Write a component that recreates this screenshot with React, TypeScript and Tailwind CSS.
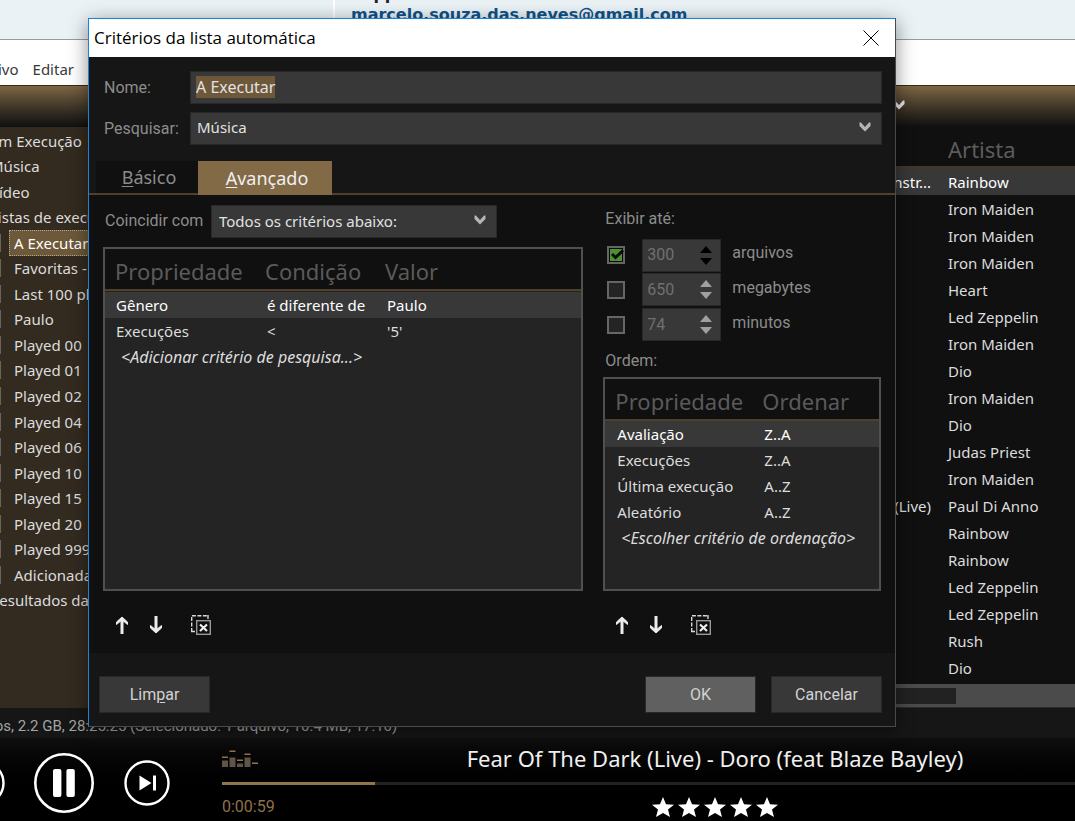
import React, { useEffect, useRef } from "react";

const playlists = [
  { label: "A Executar", selected: true },
  { label: "Favoritas - 5 estrelas" },
  { label: "Last 100 played" },
  { label: "Paulo" },
  { label: "Played 00" },
  { label: "Played 01" },
  { label: "Played 02" },
  { label: "Played 04" },
  { label: "Played 06" },
  { label: "Played 10" },
  { label: "Played 15" },
  { label: "Played 20" },
  { label: "Played 999" },
  { label: "Adicionadas" },
];

const tracks = [
  { title: "(Instr...", artist: "Rainbow" },
  { title: "", artist: "Iron Maiden" },
  { title: "", artist: "Iron Maiden" },
  { title: "", artist: "Iron Maiden" },
  { title: "", artist: "Heart" },
  { title: "", artist: "Led Zeppelin" },
  { title: "", artist: "Iron Maiden" },
  { title: "", artist: "Dio" },
  { title: "", artist: "Iron Maiden" },
  { title: "", artist: "Dio" },
  { title: "", artist: "Judas Priest" },
  { title: "", artist: "Iron Maiden" },
  { title: "(Live)", artist: "Paul Di Anno" },
  { title: "", artist: "Rainbow" },
  { title: "", artist: "Rainbow" },
  { title: "", artist: "Led Zeppelin" },
  { title: "", artist: "Led Zeppelin" },
  { title: "", artist: "Rush" },
  { title: "", artist: "Dio" },
];

const limits = [
  { id: "files", value: "300", unit: "arquivos", checked: true },
  { id: "megabytes", value: "650", unit: "megabytes", checked: false },
  { id: "minutes", value: "74", unit: "minutos", checked: false },
];

const sortRules = [
  ["Avaliação", "Z..A"],
  ["Execuções", "Z..A"],
  ["Última execução", "A..Z"],
  ["Aleatório", "A..Z"],
];

function Chevron({ className }: { className: string }) {
  return (
    <svg viewBox="0 0 12 10" className={`w-3 h-[10px] ${className}`} fill="currentColor">
      <path d="M0.500 0.500L2 0.500L6 5L10 0.500L11.500 0.500L11.500 4L6 9.500L0.500 4Z" />
    </svg>
  );
}

function ListTools() {
  return (
    <div className="flex items-center h-[21px] mt-[23px] pl-3 text-[#ececec]">
      <button aria-label="Mover para cima" className="w-[14px]">
        <svg viewBox="0 0 14 20" className="w-[14px] h-5" fill="none" stroke="currentColor" strokeWidth="3">
          <path d="M7 19V4" />
          <path d="M1.5 9.5V7L7 2L12.5 7V9.5L7 5Z" fill="currentColor" strokeWidth="1" />
        </svg>
      </button>
      <button aria-label="Mover para baixo" className="w-[14px] ml-5">
        <svg viewBox="0 0 14 20" className="w-[14px] h-5" fill="none" stroke="currentColor" strokeWidth="3">
          <path d="M7 1V16" />
          <path d="M1.5 10.5V13L7 18L12.5 13V10.5L7 15Z" fill="currentColor" strokeWidth="1" />
        </svg>
      </button>
      <button aria-label="Remover" className="w-5 ml-7">
        <svg viewBox="0 0 20 20" className="w-5 h-5" fill="none">
          <path d="M.7 17V.7H17" stroke="#d8d8d8" strokeWidth="1.4" strokeDasharray="4 1.5" />
          <path d="M0 16.5H4M17 0V4" stroke="#d8d8d8" strokeWidth="1.4" />
          <rect x="5.7" y="5.7" width="13.6" height="13.6" stroke="#9a9a9a" strokeWidth="1.4" />
          <path d="M9 9.500L16 16M16 9.500L9 16" stroke="#f0f0f0" strokeWidth="2.2" />
        </svg>
      </button>
    </div>
  );
}

function Sidebar() {
  return (
    <nav className="w-64 shrink-0 bg-[#332b20] pt-px text-[#dcdcdc]">
      <ul className="grid auto-rows-fr h-[485px] pl-[38px] whitespace-nowrap">
        <li className="flex items-center">Em Execução</li>
        <li className="flex items-center">Música</li>
        <li className="flex items-center">Vídeo</li>
        <li className="flex items-center">Listas de execução</li>
        {playlists.map((item) => (
          <li key={item.label} className="flex items-center">
            <span className="w-[11px] h-[18px] border border-[#6a655c]"></span>
            <span
              className={`ml-2 px-1 h-full flex items-center border border-dotted ${
                item.selected ? "bg-[#6d5839] border-[#b0a890] text-white" : "border-transparent"
              }`}
            >
              {item.label}
            </span>
          </li>
        ))}
        <li className="flex items-center">Resultados da pesquisa</li>
      </ul>
    </nav>
  );
}

function TrackList() {
  return (
    <div className="flex-1 flex flex-col bg-[#101010]">
      <table className="w-full mb-[3px] table-fixed border-collapse text-[#dcdcdc]">
        <thead>
          <tr className="h-10 border-b-2 border-[#463724] text-[22px] leading-6 text-[#5c5c5c]">
            <th></th>
            <th className="w-[260px] pt-1 text-left font-normal">Artista</th>
          </tr>
        </thead>
        <tbody>
          <tr className="h-px"></tr>
          {tracks.map((track, idx) => (
            <tr key={idx} className={`h-[27px] ${idx === 0 ? "bg-[#383838] text-white" : ""}`}>
              <td className="text-right pr-[17px]">{track.title}</td>
              <td>{track.artist}</td>
            </tr>
          ))}
        </tbody>
      </table>
      <div className="h-6 bg-[#4b4b4b] border-b border-[#2a2a2a] flex items-center">
        <div className="flex-1 h-4 bg-[#222222]"></div>
        <div className="w-[252px]"></div>
      </div>
    </div>
  );
}

function Player() {
  return (
    <footer className="flex-1 min-h-[83px] flex items-start bg-gradient-to-b from-[#0f0f0f] to-black to-80%">
      <div className="flex items-center w-[270px] shrink-0 h-[83px] pt-[6px] text-white">
        <button aria-label="Anterior" className="ml-[7px] w-[46px]">
          <svg viewBox="0 0 46 46" className="w-[46px] h-[46px]" fill="none" stroke="currentColor">
            <circle cx="23" cy="23" r="21.5" strokeWidth="2.4" />
            <path d="M16 16V30M30 16L19 23L30 30Z" fill="currentColor" strokeWidth="2" />
          </svg>
        </button>
        <button aria-label="Pausar" className="ml-[29px] w-[60px]">
          <svg viewBox="0 0 60 60" className="w-[60px] h-[60px]" fill="none">
            <circle cx="30" cy="30" r="28.7" stroke="currentColor" strokeWidth="2.6" />
            <rect x="19" y="16" width="8.4" height="28" rx="2" fill="currentColor" />
            <rect x="32.4" y="16" width="8.4" height="28" rx="2" fill="currentColor" />
          </svg>
        </button>
        <button aria-label="Próxima" className="ml-[30px] w-[46px]">
          <svg viewBox="0 0 46 46" className="w-[46px] h-[46px]" fill="none">
            <circle cx="23" cy="23" r="21.5" stroke="currentColor" strokeWidth="2.4" />
            <path d="M15.5 15.5L27.5 23L15.5 30.5Z" fill="currentColor" />
            <path d="M30.5 15.5V30.5" stroke="currentColor" strokeWidth="3" />
          </svg>
        </button>
      </div>
      <div className="flex-1">
        <div className="grid grid-cols-[1fr_auto_1fr] h-11">
          <svg viewBox="0 0 37 18" className="w-[37px] h-[18px] mt-3">
            <g fill="#8f7149">
              <rect x="0" y="6.500" width="6" height="1.500" />
              <rect x="7.500" y=".5" width="6" height="1.500" />
              <rect x="15" y="9.500" width="6" height="1.500" />
              <rect x="22.500" y="3.500" width="6" height="1.500" />
              <rect x="30" y="12.500" width="6" height="1.500" />
            </g>
            <g fill="#5f5448">
              <rect x="0" y="10.500" width="6" height="6.500" />
              <rect x="7.500" y="7.500" width="6" height="9.500" />
              <rect x="15" y="13.500" width="6" height="3.500" />
              <rect x="22.500" y="7.500" width="6" height="9.500" />
            </g>
          </svg>
          <h2 className="text-[22px] leading-10 text-[#f0f0f0] whitespace-nowrap">
            Fear Of The Dark (Live) - Doro (feat Blaze Bayley)
          </h2>
        </div>
        <div className="h-[3px] bg-[#232323]">
          <div className="h-full w-[153px] bg-[#93754b]"></div>
        </div>
        <div className="grid grid-cols-[1fr_auto_1fr] items-center h-9 pt-2">
          <span className="font-[Roboto,sans-serif] text-base leading-5 text-[#8f7149]">0:00:59</span>
          <div className="flex gap-1" aria-label="5 estrelas">
            {[1, 2, 3, 4, 5].map((n) => (
              <svg key={n} viewBox="0 0 22 20" className="w-[22px] h-5" fill="#ffffff">
                <path d="M11 0L14 7.200L22 7.800L16 12.600L18 20L11 16L4 20L6 12.600L0 7.800L8 7.200Z" />
              </svg>
            ))}
          </div>
        </div>
      </div>
    </footer>
  );
}

const headCell = "h-[41px] p-0 pt-1 text-left font-normal text-[22px] leading-6 text-[#5a5a5a] bg-[#101010]";
const fieldStyle = "bg-[#383838] border border-[#282828] text-[#e2e2e2] outline-none";
const buttonStyle = "w-[111px] h-[37px] border border-[#282828] text-[#d2d2d2]";
const listBox = "border-2 border-[#505050] bg-[#242424] text-[#dcdcdc]";

function CriteriaDialog() {
  const nameRef = useRef<HTMLInputElement>(null);

  useEffect(() => {
    nameRef.current?.focus();
    nameRef.current?.select();
  }, []);

  return (
    <div
      role="dialog"
      aria-label="Critérios da lista automática"
      className="absolute top-[18px] left-[88px] right-[179px] border border-t-[#1883d7] border-l-[#1883d7] border-r-[#4a4a4a] border-b-[#4a4a4a] bg-[#161616] shadow-[0_4px_18px_rgba(0,0,0,0.45)]"
    >
      <div className="h-[38px] pl-[5px] pr-4 flex items-center justify-between bg-white text-black">
        <h1 className="font-['Open_Sans',sans-serif] text-[17px] leading-6">Critérios da lista automática</h1>
        <button aria-label="Fechar" className="w-4 h-4">
          <svg viewBox="0 0 16 16" className="w-4 h-4" stroke="currentColor" strokeWidth="1">
            <path d="M.5 .5L15.500 15.500M15.500 .5L.5 15.500" />
          </svg>
        </button>
      </div>

      <div className="grid grid-cols-[86px_1fr] gap-y-2 items-center pt-[14px] pl-[15px] pr-[13px] font-[Roboto,sans-serif] text-base text-[#8c8c8c]">
        <label htmlFor="name">Nome:</label>
        <input
          id="name"
          ref={nameRef}
          defaultValue="A Executar"
          className={`h-[33px] w-full px-[5px] pb-[2px] font-['Noto_Sans',sans-serif] text-base selection:bg-[#6d5839] selection:text-[#e2e2e2] ${fieldStyle}`}
        />
        <label htmlFor="search">Pesquisar:</label>
        <div className="relative">
          <select
            id="search"
            className={`block appearance-none h-[33px] w-full px-[6px] pb-[2px] font-['Noto_Sans',sans-serif] text-[15px] ${fieldStyle}`}
          >
            <option>Música</option>
          </select>
          <Chevron className="absolute right-[11px] top-[10px] pointer-events-none text-[#b4b4b4]" />
        </div>
      </div>

      <div role="tablist" className="flex mt-4 pl-[7px] border-b-2 border-[#4f3f2b] text-lg leading-6">
        <button role="tab" className="w-[102px] h-8 pl-1 bg-[#101010] text-[#8c8c8c]">
          <u className="underline-offset-2">B</u>ásico
        </button>
        <button role="tab" aria-selected="true" className="w-[134px] h-[34px] -mb-[2px] pl-1 bg-[#826a47] text-[#f0f0f0]">
          <u className="underline-offset-2">A</u>vançado
        </button>
      </div>

      <div className="flex justify-between gap-5 pt-[10px] pb-[18px] pl-[14px] pr-[14px] bg-[#101010]">
        <section className="w-[481px]">
          <div className="flex items-center">
            <label htmlFor="match" className="w-[108px] pl-[2px] pb-[2px] font-[Roboto,sans-serif] text-base text-[#8c8c8c]">
              Coincidir com
            </label>
            <div className="relative">
              <select id="match" className={`block appearance-none w-[286px] h-[33px] px-[7px] pb-[2px] ${fieldStyle}`}>
                <option>Todos os critérios abaixo:</option>
              </select>
              <Chevron className="absolute right-[11px] top-[10px] pointer-events-none text-[#b4b4b4]" />
            </div>
          </div>
          <div className={`mt-[9px] h-[344px] ${listBox}`}>
            <table className="w-full table-fixed border-collapse">
              <thead>
                <tr className="border-b-2 border-[#4f3f2b]">
                  <th className={`w-[150px] ${headCell}`}>
                    <span className="pl-[10px]">Propriedade</span>
                  </th>
                  <th className={`w-[120px] ${headCell}`}>
                    <span className="pl-[10px]">Condição</span>
                  </th>
                  <th className={headCell}>
                    <span className="pl-[10px]">Valor</span>
                  </th>
                </tr>
              </thead>
              <tbody>
                <tr className="h-[2px]"></tr>
                <tr className="h-[26px] bg-[#383838] text-white">
                  <td className="pl-[11px]">Gênero</td>
                  <td className="pl-3 whitespace-nowrap">é diferente de</td>
                  <td className="pl-3">Paulo</td>
                </tr>
                <tr className="h-[26px]">
                  <td className="pl-[11px]">Execuções</td>
                  <td className="pl-3">&lt;</td>
                  <td className="pl-3">'5'</td>
                </tr>
                <tr className="h-[26px] italic text-base leading-5">
                  <td colSpan={3} className="pl-4">&lt;Adicionar critério de pesquisa...&gt;</td>
                </tr>
              </tbody>
            </table>
          </div>
          <ListTools />
        </section>

        <section className="w-[278px]">
          <h2 className="pl-[2px] pt-1 font-[Roboto,sans-serif] text-base leading-5 text-[#8c8c8c]">Exibir até:</h2>
          <div className="grid auto-rows-fr h-[104px] mt-[9px] font-[Roboto,sans-serif] text-base text-[#8c8c8c]">
            {limits.map((limit) => (
              <div key={limit.id} className="flex items-center">
                <span className="relative w-[18px] h-[18px] ml-1">
                  <input
                    type="checkbox"
                    id={limit.id}
                    defaultChecked={limit.checked}
                    className="block appearance-none w-[18px] h-[18px] border-2 border-[#666666] bg-[#242424] checked:bg-[#4c9230]"
                  />
                  {limit.checked && (
                    <svg viewBox="0 0 18 18" className="absolute inset-0 pointer-events-none" fill="none" stroke="#0a0a0a">
                      <rect x="2.500" y="2.500" width="13" height="13" strokeWidth="1" />
                      <path d="M5 8L8.500 11.500L16 4.500" strokeWidth="3" />
                    </svg>
                  )}
                </span>
                <div className={`ml-[17px] w-[79px] h-[33px] flex items-center justify-between pr-2 ${fieldStyle}`}>
                  <input
                    aria-label={limit.unit}
                    defaultValue={limit.value}
                    className="w-10 pl-1 bg-transparent outline-none text-[#707070]"
                  />
                  <div className={`flex flex-col gap-[5px] ${limit.checked ? "text-black" : "text-[#a0a0a0]"}`}>
                    <button aria-label="Aumentar">
                      <svg viewBox="0 0 12 7" className="block w-3 h-[7px]" fill="currentColor">
                        <path d="M6 0L12 7H0Z" />
                      </svg>
                    </button>
                    <button aria-label="Diminuir">
                      <svg viewBox="0 0 12 7" className="block w-3 h-[7px]" fill="currentColor">
                        <path d="M6 7L12 0H0Z" />
                      </svg>
                    </button>
                  </div>
                </div>
                <label htmlFor={limit.id} className="ml-[11px] pb-1">
                  {limit.unit}
                </label>
              </div>
            ))}
          </div>
          <h2 className="pl-[2px] mt-[9px] font-[Roboto,sans-serif] text-base leading-5 text-[#8c8c8c]">Ordem:</h2>
          <div className={`mt-[6px] h-[214px] ${listBox}`}>
            <table className="w-full table-fixed border-collapse">
              <thead>
                <tr className="border-b-2 border-[#4f3f2b]">
                  <th className={`w-[147px] ${headCell}`}>
                    <span className="pl-[10px]">Propriedade</span>
                  </th>
                  <th className={headCell}>
                    <span className="pl-[10px]">Ordenar</span>
                  </th>
                </tr>
              </thead>
              <tbody>
                <tr className="h-px"></tr>
                {sortRules.map(([property, order], idx) => (
                  <tr key={property} className={`h-[26px] ${idx === 0 ? "bg-[#383838] text-white" : ""}`}>
                    <td className="pl-[12px] whitespace-nowrap">{property}</td>
                    <td className="pl-3">{order}</td>
                  </tr>
                ))}
                <tr className="h-[26px] italic text-base leading-5">
                  <td colSpan={2} className="pl-4 whitespace-nowrap">&lt;Escolher critério de ordenação&gt;</td>
                </tr>
              </tbody>
            </table>
          </div>
          <ListTools />
        </section>
      </div>

      <div className="flex items-center pt-[23px] pb-[13px] pl-[10px] pr-[13px] font-[Roboto,sans-serif] text-base">
        <button className={`bg-[#383838] ${buttonStyle}`}>
          Lim<u className="underline-offset-2">p</u>ar
        </button>
        <button className={`ml-auto bg-[#606060] ${buttonStyle}`}>OK</button>
        <button className={`ml-[15px] bg-[#383838] ${buttonStyle}`}>Cancelar</button>
      </div>
    </div>
  );
}

export default function App() {
  return (
    <div className="relative min-h-screen flex flex-col overflow-hidden bg-[#eaf2f6] font-['Noto_Sans',sans-serif] text-[15px] leading-5">
      <div className="h-[39px] overflow-hidden flex">
        <div className="w-[333px] border-r-2 border-white box-content"></div>
        <div className="-mt-[15px] pl-4 font-['DejaVu_Sans',sans-serif] font-bold text-base leading-5">
          <p className="text-[#222222]">Zapp</p>
          <a href="mailto:marcelo.souza.das.neves@gmail.com" className="text-[#105289]">
            marcelo.souza.das.neves@gmail.com
          </a>
        </div>
      </div>

      <div className="flex-1 flex flex-col -ml-12 -mr-[133px] border-t border-[#9a9a9a]">
        <div className="h-[45px] flex items-center gap-[14px] pl-3 pt-3 bg-white text-[#3a3a3a]">
          <button>Arquivo</button>
          <button>Editar</button>
        </div>
        <div className="h-[42px] pb-1 border-t border-[#33291a] bg-gradient-to-b from-[#7d6644] to-[#101010] flex items-center justify-end pr-[303px]">
          <Chevron className="text-[#e6e6e6]" />
        </div>
        <div className="flex">
          <Sidebar />
          <TrackList />
        </div>
        <div className="h-[30px] pl-[38px] flex items-center bg-[#161616] pt-[6px] font-[Roboto,sans-serif] text-[15px] text-[#a4a4a4]">
          <span>tos, 2.2 GB, 28:25:25 (Selecionado: 1 arquivo, 10.4 MB, 17:10)</span>
        </div>
        <Player />
      </div>

      <CriteriaDialog />
    </div>
  );
}
